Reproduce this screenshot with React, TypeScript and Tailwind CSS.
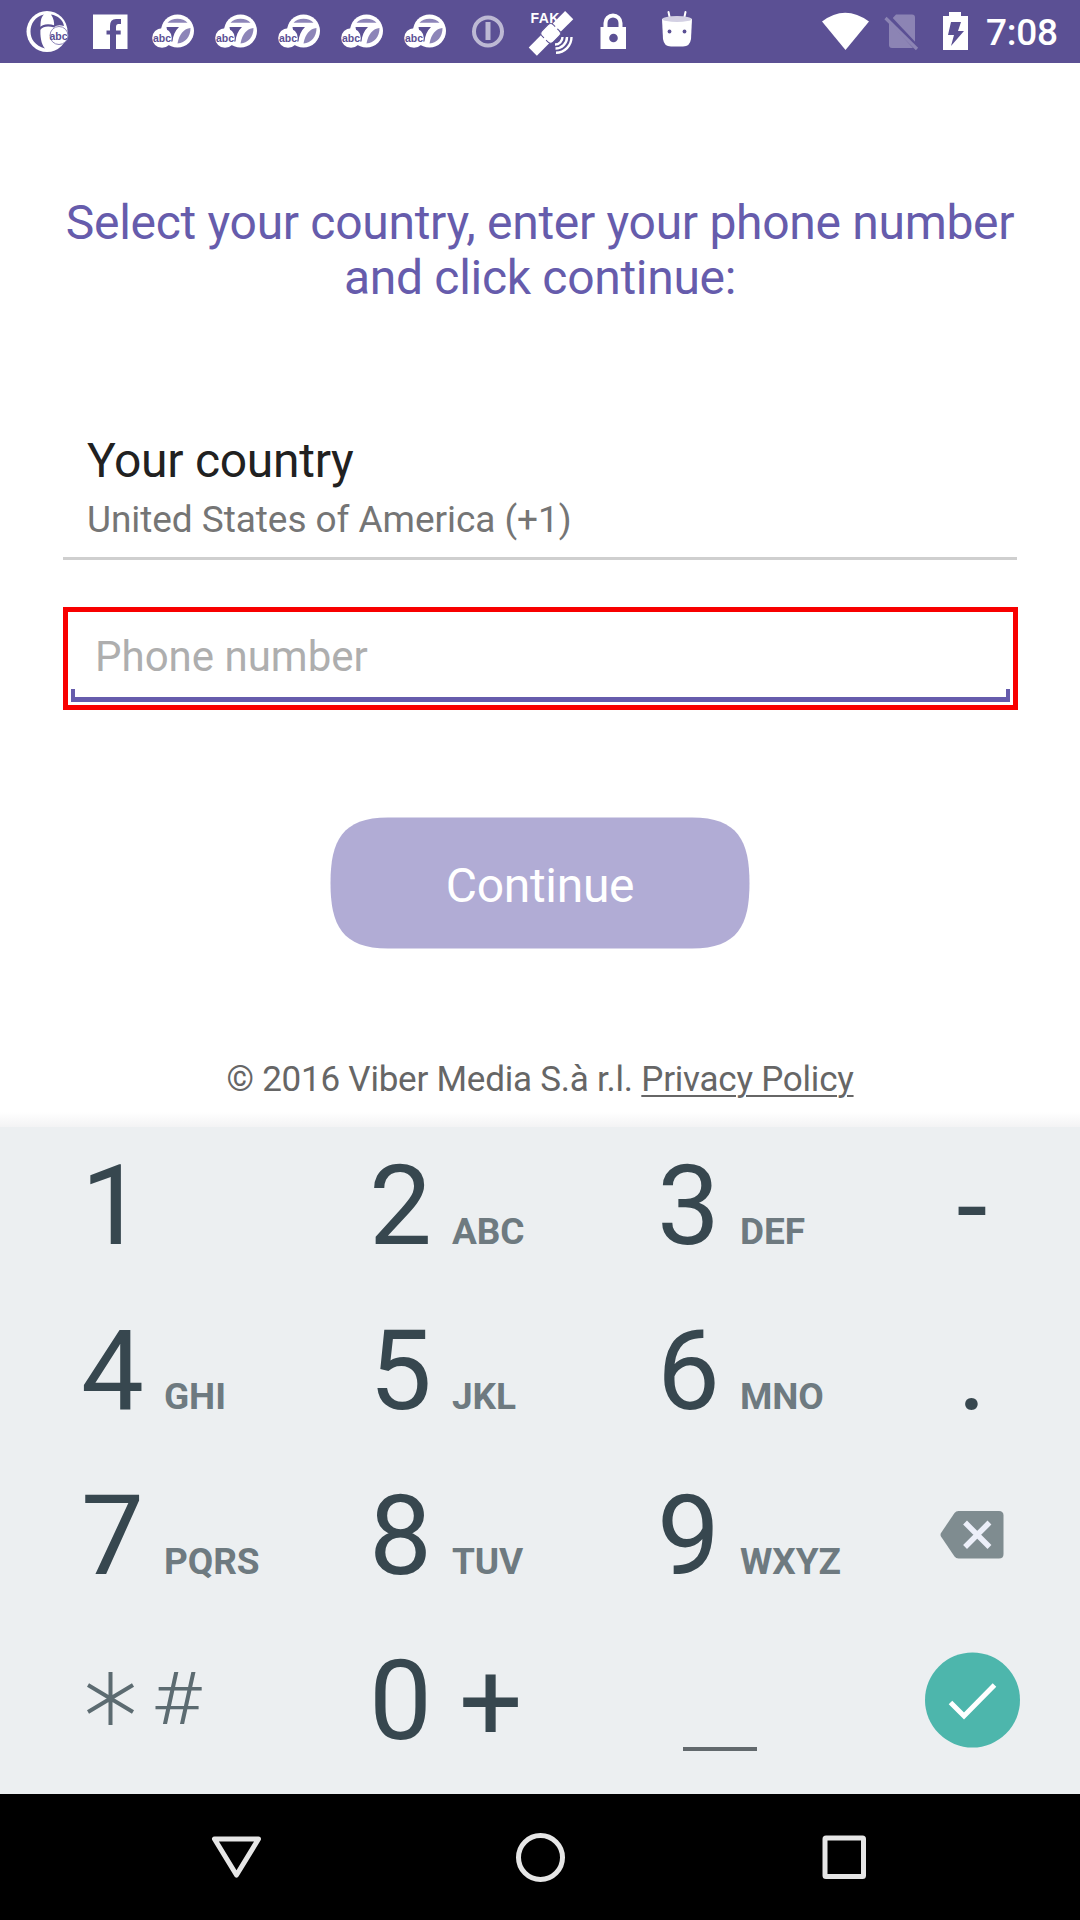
import React from "react";

const slot = "flex h-[63px] w-[63px] shrink-0 items-center justify-center";

function SixAbcIcon() {
  return (
    <svg width="63" height="63" viewBox="0 0 63 63">
      <circle cx="31" cy="31.500" r="20.500" fill="#fff" />
      <path d="M28 14.500C19 16.500 14.500 24 14.500 31.500S19 45.500 29 48.500C25 44 24 36 24.500 28 24.500 21 25 17 28 14.500z" fill="#5b5094" />
      <path d="M35 14.500c7 1 12 5.500 13 11.500q-6-2-10 1c.500-5-.500-9-3-12.500z" fill="#5b5094" />
      <path d="M23.500 29q5-5.500 15-2.500" fill="none" stroke="#5b5094" strokeWidth="2.200" />
      <circle cx="43" cy="35.500" r="9" fill="#fff" stroke="#8d85b8" strokeWidth="1" />
      <text x="42.500" y="39.500" textAnchor="middle" fontSize="10.500" fontWeight="700" fill="#5b5094" fontFamily="Liberation Sans, sans-serif">abc</text>
    </svg>
  );
}

function AbcSevenIcon() {
  return (
    <svg width="63" height="63" viewBox="0 0 63 63">
      <circle cx="35.500" cy="31" r="16.500" fill="#fff" />
      <path d="M25.500 22.800Q29 18.700 35.500 18.700T45.500 22.800z" fill="#8d85b8" />
      <path d="M24.500 27h12.500c-4 4-6 8.500-6.500 14.500H27z" fill="#5b5094" />
      <path d="M48.500 28C42 28.500 37 34.500 35.500 43.500 43.500 43 48.500 36.500 48.500 28z" fill="#8d85b8" />
      <circle cx="20" cy="38" r="9.800" fill="#fff" />
      <text x="20" y="41.500" textAnchor="middle" fontSize="10.500" fontWeight="700" fill="#5b5094" fontFamily="Liberation Sans, sans-serif">abc</text>
    </svg>
  );
}

function StatusBar() {
  return (
    <header className="flex h-[63px] items-center bg-[#5b5094] pl-4">
      <div className={slot}><SixAbcIcon /></div>
      <div className={slot}>
        <svg width="63" height="63" viewBox="0 0 63 63">
          <path d="M14 14.500h34.500V49H37V34.500h4.700v-4H37v-3.500q0-3 2.500-3h2.500v-5h-5q-6 0-6 7v4.500h-3.500v4h3.500V49H14z" fill="#fff" />
        </svg>
      </div>
      <div className={slot}><AbcSevenIcon /></div>
      <div className={slot}><AbcSevenIcon /></div>
      <div className={slot}><AbcSevenIcon /></div>
      <div className={slot}><AbcSevenIcon /></div>
      <div className={slot}><AbcSevenIcon /></div>
      <div className={slot}>
        <svg width="63" height="63" viewBox="0 0 63 63">
          <circle cx="31" cy="31.500" r="14" fill="none" stroke="#bdb9d4" strokeWidth="4" />
          <path d="M31 22v18" stroke="#bdb9d4" strokeWidth="5" />
        </svg>
      </div>
      <div className={slot}>
        <svg width="63" height="63" viewBox="0 0 63 63">
          <text x="10.500" y="23" fontSize="14" fontWeight="700" letterSpacing="0.4" fill="#fff" fontFamily="Liberation Sans, sans-serif">FAK</text>
          <g transform="translate(31 33) rotate(-45)" fill="#fff">
            <rect x="-26" y="-5.500" width="17.500" height="11.500" />
            <rect x="-8.500" y="-8" width="16" height="16" rx="4" stroke="#5b5094" strokeWidth="1" />
            <rect x="8" y="-5.500" width="17.500" height="11.500" />
            <rect x="-10" y="-1.500" width="20" height="3" />
          </g>
          <path d="M35 44.500a7.500 7.500 0 0 0 7.500-7.500M35.500 48.500a11.500 11.500 0 0 0 11.500-11.500M36 52.800a15.800 15.800 0 0 0 15.500-15.800" fill="none" stroke="#fff" strokeWidth="2.400" />
        </svg>
      </div>
      <div className={slot}>
        <svg width="63" height="63" viewBox="0 0 63 63">
          <path d="M22.500 29v-6a7.500 7.500 0 0 1 15 0v6" fill="none" stroke="#fff" strokeWidth="4" />
          <path d="M17.500 27h25.500v22H17.500z" fill="#fff" />
          <circle cx="30.500" cy="38" r="4.300" fill="#5b5094" />
        </svg>
      </div>
      <div className={slot}>
        <svg width="63" height="63" viewBox="0 0 63 63">
          <path d="M22.500 12l1.500 7M39.500 12l-1.500 7" stroke="#fff" strokeWidth="2" strokeLinecap="round" />
          <path d="M16 19h30l-1 20q-1 7.500-8 7.500h-12q-7 0-8-7.500z" fill="#fff" />
          <ellipse cx="31" cy="19" rx="14.800" ry="3" fill="#d3d0e3" />
          <circle cx="23.500" cy="31.500" r="1.900" fill="#5b5094" />
          <circle cx="38.500" cy="31.500" r="1.900" fill="#5b5094" />
        </svg>
      </div>
      <svg className="ml-auto shrink-0" width="150" height="63" viewBox="820 0 150 63">
        <path d="M822 21.500Q845 4 869 21.500L845.500 50z" fill="#fff" />
        <path d="M889 22l7-7.500h16q3 0 3 3V45q0 3-3 3h-20q-3 0-3-3z" fill="#8c84b4" />
        <path d="M887 16l31 33" stroke="#5b5094" strokeWidth="5.500" />
        <path d="M885.500 18l31.500 31" stroke="#8c84b4" strokeWidth="3.200" />
        <path d="M949 12h12v4h7v34h-25V16h6z" fill="#fff" />
        <path d="M951 22h10l-3 9h6l-13 15 3-11h-6z" fill="#5b5094" />
      </svg>
      <span className="ml-4 mr-[21px] w-[73px] whitespace-nowrap pt-[2px] text-[37px] font-medium leading-[63px] tracking-[-0.3px] text-white">7:08</span>
    </header>
  );
}

function Key({ digit, letters }: { digit: string; letters?: string }) {
  return (
    <div className="flex w-[288px] items-baseline">
      <span className="w-[83px] text-[112px] leading-[157px]">{digit}</span>
      {letters && <span className="text-[37px] font-bold tracking-[-0.1px] text-[#6e7a80]">{letters}</span>}
    </div>
  );
}

function Keypad() {
  return (
    <section className="h-[667px] bg-[#eceff1] pl-[81px] text-[#37474f]">
      <div className="flex h-[165px]">
        <Key digit="1" /><Key digit="2" letters="ABC" /><Key digit="3" letters="DEF" />
        <div className="w-[54px] text-center text-[112px] leading-[160px]">-</div>
      </div>
      <div className="flex h-[165px]">
        <Key digit="4" letters="GHI" /><Key digit="5" letters="JKL" /><Key digit="6" letters="MNO" />
        <div className="w-[54px] text-center text-[112px] leading-[157px]">.</div>
      </div>
      <div className="flex h-[165px]">
        <Key digit="7" letters="PQRS" /><Key digit="8" letters="TUV" /><Key digit="9" letters="WXYZ" />
        <div className="flex w-[54px] justify-center pt-[54px]">
          <svg className="shrink-0" width="64" height="48" viewBox="0 0 64 48">
            <path d="M14.500 2Q16 0 18.500 0H59q4.500 0 4.500 4.500v38.500Q63.500 47.500 59 47.500H18.500Q16 47.500 14.500 45.500L1 25.500Q0 23.700 1 22z" fill="#7f8c90" />
            <path d="M27 13.500l20.500 20.500M47.500 13.500L27 34" stroke="#eceff9" strokeWidth="5.500" strokeLinecap="square" />
          </svg>
        </div>
      </div>
      <div className="flex h-[172px]">
        <div className="flex w-[288px] items-start pl-[6px]">
          <svg className="mt-[50px]" width="48" height="54" viewBox="0 0 48 54">
            <path d="M23.500 0v53M1 13l45 27M46 13l-45 27" stroke="#5c6b71" strokeWidth="4" />
          </svg>
          <span className="ml-[17px] inline-block origin-left scale-x-[1.16] text-[73px] font-light leading-[155px] text-[#5c6b71]">#</span>
        </div>
        <div className="flex w-[288px]">
          <span className="w-[90px] text-[112px] leading-[157px]">0</span>
          <span className="text-[112px] leading-[159px]">+</span>
        </div>
        <div className="w-[288px] pl-[26px] pt-[125px]">
          <div className="h-[4px] w-[74px] bg-[#62696d]" />
        </div>
        <div className="flex w-[54px] justify-center pt-[30px]">
          <svg className="shrink-0" width="96" height="96" viewBox="0 0 96 96">
            <circle cx="48.500" cy="48" r="47.500" fill="#4db6ac" />
            <path d="M26.500 50.500L40 64 70.500 33" fill="none" stroke="#fff" strokeWidth="5" />
          </svg>
        </div>
      </div>
    </section>
  );
}

export default function App() {
  return (
    <div className="flex h-[1920px] w-[1080px] flex-col overflow-hidden bg-white font-['Roboto',sans-serif]">
      <StatusBar />
      <main className="flex h-[1064px] flex-col">
        <h1 className="mt-[132px] whitespace-nowrap text-center text-[48px] leading-[55px] tracking-[-0.3px] text-[#665cac]">
          Select your country, enter your phone number<br />and click continue:
        </h1>
        <div className="mx-[63px] mt-[122px] h-[133px] border-b-3 border-[#cfcfcf] pl-6">
          <div className="text-[48px] leading-[67px] tracking-[-0.28px] text-[#212121]">Your country</div>
          <div className="text-[37px] leading-[52px] tracking-[-0.06px] text-[#757575]">United States of America (+1)</div>
        </div>
        <div className="ml-[63px] mt-[47px] flex h-[103px] w-[955px] flex-col border-5 border-[#f80000] px-[3px] pb-[3px]">
          <div className="h-[77px] pl-6 text-[42px] leading-[90px] text-[#aeaeae]">Phone number</div>
          <div className="h-[13px] border-x-4 border-b-5 border-[#665cac]" />
        </div>
        <button className="relative mx-auto mt-[107px] h-[132px] w-[420px] text-[48px] leading-[138px] tracking-[-0.3px] text-white">
          <svg className="absolute inset-0" width="420" height="132" viewBox="0 0 420 132">
            <path d="M58 .5H362C408 .5 419.500 24 419.500 66S408 131.500 362 131.500H58C12 131.500 .5 108 .5 66S12 .5 58 .5z" fill="#b1acd5" />
          </svg>
          <span className="relative">Continue</span>
        </button>
        <p className="mt-[109px] text-center text-[35px] leading-[44px] tracking-[-0.23px] text-[#666]">
          © 2016 Viber Media S.à r.l. <span className="underline decoration-2 underline-offset-4">Privacy Policy</span>
        </p>
        <div className="mt-auto h-[15px] bg-linear-to-b from-white to-[#f3f3f4]" />
      </main>
      <Keypad />
      <nav className="flex h-[126px] items-center justify-between bg-black px-[205px]">
        <svg width="63" height="63" viewBox="0 0 63 63">
          <path d="M9.500 13h44L31.500 49z" fill="none" stroke="#e6e6e6" strokeWidth="5" strokeLinejoin="round" />
        </svg>
        <svg width="63" height="63" viewBox="0 0 63 63">
          <circle cx="31.500" cy="31.500" r="22" fill="none" stroke="#e6e6e6" strokeWidth="5" />
        </svg>
        <svg width="63" height="63" viewBox="0 0 63 63">
          <rect x="13" y="12" width="38.500" height="38.500" rx="1" fill="none" stroke="#e6e6e6" strokeWidth="5" />
        </svg>
      </nav>
    </div>
  );
}
